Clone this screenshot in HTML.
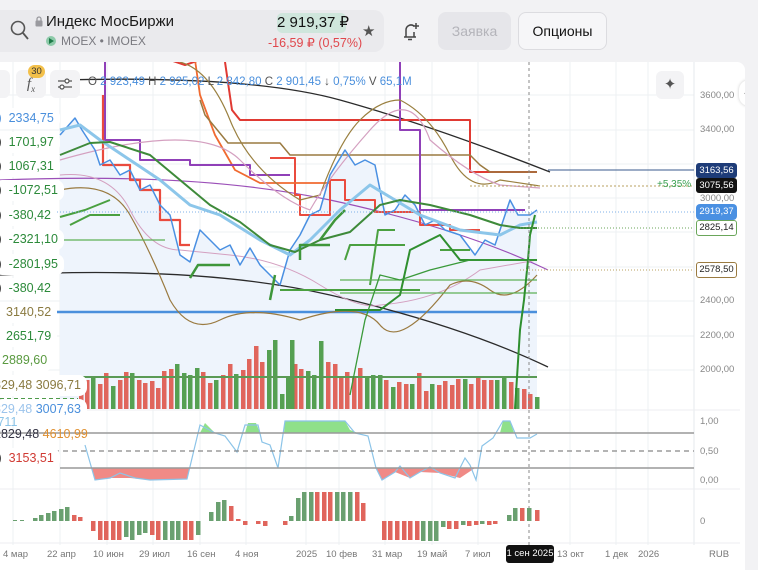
<!DOCTYPE html>
<html><head><meta charset="utf-8"><style>
*{margin:0;padding:0;box-sizing:border-box}
body{width:758px;height:570px;overflow:hidden;background:#f2f2f4;font-family:"Liberation Sans","DejaVu Sans",sans-serif;position:relative}
.card{position:absolute;left:0;top:10px;width:384px;height:42px;background:#eaeaed;border-radius:0 10px 10px 0}
.abs{position:absolute;white-space:nowrap}
.chart{position:absolute;left:0;top:62px;width:745px;height:508px;background:#fff;border-radius:0 8px 0 0;overflow:hidden}
.lbl{position:absolute;left:-6px;height:21px;background:#fff;border-radius:8px;font-size:12.5px;line-height:21px;padding:0 6px 0 0;white-space:nowrap;color:#333}
</style></head><body>
<div class="card"></div>
<svg class="abs" style="left:10px;top:20px" width="20" height="22" viewBox="0 0 20 22"><circle cx="8" cy="8" r="6.5" fill="none" stroke="#555" stroke-width="1.6"/><path d="M13 13l5 6" stroke="#555" stroke-width="1.8"/></svg>
<svg class="abs" style="left:35px;top:16px" width="8" height="11" viewBox="0 0 8 11"><rect x="0.5" y="4.5" width="7" height="6" rx="1" fill="#9a9a9f"/><path d="M2 5V3a2 2 0 0 1 4 0v2" fill="none" stroke="#9a9a9f" stroke-width="1.3"/></svg>
<div class="abs" style="left:46px;top:13px;font-size:15px;color:#1a1a1a">Индекс МосБиржи</div>
<div class="abs" style="left:46px;top:36px;width:10px;height:10px;border-radius:5px;background:#8dcaa9"></div>
<div class="abs" style="left:49px;top:38px;width:0;height:0;border-left:5px solid #1d7a48;border-top:3px solid transparent;border-bottom:3px solid transparent"></div>
<div class="abs" style="left:61px;top:34px;font-size:12px;color:#7a7a80">MOEX • IMOEX</div>
<div class="abs" style="left:277px;top:13px;width:69px;height:20px;background:#cfe6dc;border-radius:5px;font-size:15px;line-height:20px;text-align:center;color:#111">2 919,37 ₽</div>
<div class="abs" style="left:268px;top:35px;font-size:12.5px;color:#e0474c">-16,59 ₽ (0,57%)</div>
<div class="abs" style="left:362px;top:22px;font-size:15px;color:#555">★</div>
<svg class="abs" style="left:400px;top:20px" width="22" height="22" viewBox="0 0 22 22"><path d="M4 17h12M6 17V10a5 5 0 0 1 8-4M14 17v-5M8 19.5h4" fill="none" stroke="#444" stroke-width="1.5"/><path d="M16 3v6M13 6h6" stroke="#444" stroke-width="1.5"/></svg>
<div class="abs" style="left:438px;top:12px;width:73px;height:38px;background:#e6e6ea;border-radius:8px;font-size:14px;line-height:38px;text-align:center;color:#b4b4ba">Заявка</div>
<div class="abs" style="left:518px;top:12px;width:89px;height:38px;background:#f6f6f8;border:1px solid #dcdce0;border-radius:8px;font-size:14px;line-height:36px;text-align:center;color:#111">Опционы</div>

<div class="chart">
<svg width="745" height="508" viewBox="0 62 745 508" style="position:absolute;left:0;top:0">
<!-- grid -->
<g stroke="#eef0f3" stroke-width="1">
<line x1="0" y1="95" x2="694" y2="95"/><line x1="0" y1="130" x2="694" y2="130"/><line x1="0" y1="164" x2="694" y2="164"/><line x1="0" y1="198" x2="694" y2="198"/><line x1="0" y1="232" x2="694" y2="232"/><line x1="0" y1="267" x2="694" y2="267"/><line x1="0" y1="301" x2="694" y2="301"/><line x1="0" y1="336" x2="694" y2="336"/><line x1="0" y1="370" x2="694" y2="370"/>
<line x1="13" y1="62" x2="13" y2="545"/><line x1="60" y1="62" x2="60" y2="545"/><line x1="107" y1="62" x2="107" y2="545"/><line x1="153" y1="62" x2="153" y2="545"/><line x1="200" y1="62" x2="200" y2="545"/><line x1="246" y1="62" x2="246" y2="545"/><line x1="306" y1="62" x2="306" y2="545"/><line x1="339" y1="62" x2="339" y2="545"/><line x1="385" y1="62" x2="385" y2="545"/><line x1="432" y1="62" x2="432" y2="545"/><line x1="478" y1="62" x2="478" y2="545"/><line x1="570" y1="62" x2="570" y2="545"/><line x1="616" y1="62" x2="616" y2="545"/><line x1="648" y1="62" x2="648" y2="545"/>
</g>
<line x1="694" y1="62" x2="694" y2="545" stroke="#e6e8ec"/>
<line x1="0" y1="410" x2="740" y2="410" stroke="#eceef1"/><line x1="0" y1="489" x2="740" y2="489" stroke="#eceef1"/><line x1="0" y1="543" x2="740" y2="543" stroke="#eceef1"/>
<!-- price fill -->
<path d="M60 135L75 118L82 130L95 150L100 165L110 160L120 175L130 170L140 190L150 185L160 205L170 215L180 255L190 262L200 230L210 240L220 250L230 245L240 265L250 248L260 265L270 275L280 285L290 250L300 235L310 215L320 210L330 175L345 150L355 165L365 160L375 165L385 215L395 210L405 195L415 205L425 225L435 220L445 230L460 235L475 255L485 240L495 245L505 215L510 200L518 215L530 215L537 210L537 409L60 409Z" fill="#eef4fc"/>
<!-- volume bars -->
<g fill="#e0655c">
<rect x="79" y="380" width="4.5" height="29"/><rect x="85" y="380" width="4.5" height="29"/><rect x="98" y="384" width="4.5" height="25"/><rect x="104" y="373" width="4.5" height="36"/><rect x="118" y="380" width="4.5" height="29"/><rect x="124" y="372" width="4.5" height="37"/><rect x="137" y="380" width="4.5" height="29"/><rect x="143" y="383" width="4.5" height="26"/><rect x="150" y="381" width="4.5" height="28"/><rect x="156" y="388" width="4.5" height="21"/><rect x="162" y="371" width="4.5" height="38"/><rect x="169" y="369" width="4.5" height="40"/><rect x="201" y="372" width="4.5" height="37"/><rect x="208" y="383" width="4.5" height="26"/><rect x="221" y="375" width="4.5" height="34"/><rect x="228" y="364" width="4.5" height="45"/><rect x="241" y="370" width="4.5" height="39"/><rect x="247" y="359" width="4.5" height="50"/><rect x="254" y="346" width="4.5" height="63"/><rect x="260" y="362" width="4.5" height="47"/><rect x="293" y="364" width="4.5" height="45"/><rect x="299" y="369" width="4.5" height="40"/><rect x="326" y="362" width="4.5" height="47"/><rect x="333" y="364" width="4.5" height="45"/><rect x="339" y="377" width="4.5" height="32"/><rect x="345" y="372" width="4.5" height="37"/><rect x="352" y="377" width="4.5" height="32"/><rect x="358" y="368" width="4.5" height="41"/><rect x="384" y="380" width="4.5" height="29"/><rect x="397" y="382" width="4.5" height="27"/><rect x="404" y="384" width="4.5" height="25"/><rect x="417" y="373" width="4.5" height="36"/><rect x="424" y="391" width="4.5" height="18"/><rect x="437" y="385" width="4.5" height="24"/><rect x="443" y="381" width="4.5" height="28"/><rect x="450" y="385" width="4.5" height="24"/><rect x="456" y="379" width="4.5" height="30"/><rect x="469" y="384" width="4.5" height="25"/><rect x="476" y="376" width="4.5" height="33"/><rect x="482" y="380" width="4.5" height="29"/><rect x="489" y="380" width="4.5" height="29"/><rect x="509" y="382" width="4.5" height="27"/><rect x="522" y="389" width="4.5" height="20"/><rect x="528" y="394" width="4.5" height="15"/>
</g>
<g fill="#55a052">
<rect x="91" y="376" width="4.5" height="33"/><rect x="111" y="386" width="4.5" height="23"/><rect x="130" y="373" width="4.5" height="36"/><rect x="175" y="364" width="4.5" height="45"/><rect x="182" y="373" width="4.5" height="36"/><rect x="188" y="375" width="4.5" height="34"/><rect x="195" y="368" width="4.5" height="41"/><rect x="214" y="380" width="4.5" height="29"/><rect x="234" y="374" width="4.5" height="35"/><rect x="267" y="350" width="4.5" height="59"/><rect x="273" y="340" width="4.5" height="69"/><rect x="280" y="394" width="4.5" height="15"/><rect x="286" y="376" width="4.5" height="33"/><rect x="290" y="340" width="4.5" height="69"/><rect x="306" y="371" width="4.5" height="38"/><rect x="312" y="375" width="4.5" height="34"/><rect x="319" y="341" width="4.5" height="68"/><rect x="365" y="377" width="4.5" height="32"/><rect x="371" y="375" width="4.5" height="34"/><rect x="378" y="375" width="4.5" height="34"/><rect x="391" y="387" width="4.5" height="22"/><rect x="410" y="384" width="4.5" height="25"/><rect x="430" y="384" width="4.5" height="25"/><rect x="463" y="379" width="4.5" height="30"/><rect x="495" y="380" width="4.5" height="29"/><rect x="502" y="376" width="4.5" height="33"/><rect x="515" y="388" width="4.5" height="21"/><rect x="535" y="397" width="4.5" height="12"/>
</g>
<line x1="78" y1="377" x2="537" y2="377" stroke="#5a9a55" stroke-width="2"/>
<line x1="0" y1="399" x2="78" y2="399" stroke="#4e9a4a" stroke-width="2" stroke-dasharray="4 3"/>
<!-- indicator lines -->
<g fill="none" stroke-linejoin="round">
<path d="M0 312H537" stroke="#4a8fdc" stroke-width="2.5"/>
<path d="M60 80Q250 75 340 100T550 172" stroke="#2b2b2b" stroke-width="1.3"/>
<path d="M0 275Q200 265 330 295T548 367" stroke="#2b2b2b" stroke-width="1.3"/>
<path d="M0 180Q200 172 330 200T548 270" stroke="#9b4fb8" stroke-width="1.2"/>
<path d="M170 60L185 65L200 60M225 62L232 110L240 120H470V172H537" stroke="#e03a33" stroke-width="2"/>
<path d="M103 95V165H130V180H140V190H160V220H180V245H190" stroke="#ea4b3e" stroke-width="2.2"/>
<path d="M270 158H295V195H300V215H330V180H345V200H375V212H420V225H450V230H480" stroke="#ea4b3e" stroke-width="2"/>
<path d="M195 60L200 95L215 135L235 170L260 183H330" stroke="#f06a30" stroke-width="1.8"/>
<path d="M200 100L205 115L228 143H280L290 155H470L480 165L490 172H537" stroke="#9a7a40" stroke-width="1.5"/>
<path d="M105 62V140H140V160H190V165H250V175H290M400 62V130H420V210H525" stroke="#9040b8" stroke-width="2"/>
<path d="M180 62Q210 70 230 120T300 200L320 195Q340 140 360 120T400 100Q430 115 450 155T500 180L540 186" stroke="#9a8040" stroke-width="1.2"/>
<path d="M60 160Q200 120 240 160T310 210Q330 175 370 130T430 140Q470 175 500 185L540 188" stroke="#d4a0c0" stroke-width="1.2"/>
<path d="M60 175Q110 170 130 210T180 250L230 255Q280 260 320 285T380 305Q440 300 480 270L537 260" stroke="#d4a0c0" stroke-width="1"/>
<path d="M60 190Q110 180 130 215T170 300Q190 335 220 320T300 320Q360 300 380 325T450 285Q470 275 490 290T537 275" stroke="#9a7a40" stroke-width="1.2"/>
<path d="M60 135L75 118L82 130L95 150L100 165L110 160L120 175L130 170L140 190L150 185L160 205L170 215L180 255L190 262L200 230L210 240L220 250L230 245L240 265L250 248L260 265L270 275L280 285L290 250L300 235L310 215L320 210L330 175L345 150L355 165L365 160L375 165L385 215L395 210L405 195L415 205L425 225L435 220L445 230L460 235L475 255L485 240L495 245L505 215L510 200L518 215L530 215L537 210" stroke="#4a90e2" stroke-width="1.5"/>
<path d="M60 130L80 125L100 140L130 160L160 180L190 205L220 215L260 240L290 255L310 240L340 210L370 185L395 200L420 215L460 230L500 235L520 225L537 222" stroke="#8cc6ea" stroke-width="3"/>
<path d="M60 155L90 143L110 142L150 155L180 180L210 205L240 222L270 245L295 252L320 240L350 232L380 205L400 200L430 205L470 215L500 225L520 228L537 228" stroke="#3e8a3a" stroke-width="2"/>
<path d="M190 278L198 265H230M270 300L275 275M300 260L300 245H330M320 240L335 220L345 210" stroke="#3e963a" stroke-width="2.5"/>
<path d="M60 217L85 210L110 200M70 225L90 215L120 215M370 285L378 230L395 230M345 260L350 245L405 245M280 290L320 290H420M440 250L470 250" stroke="#4aa040" stroke-width="2"/>
<path d="M0 240H165M0 248H60M340 280H537M340 293H537" stroke="#5fb055" stroke-width="1.3"/>
<path d="M335 310H380L400 295L410 250L420 245L440 235L460 260H537" stroke="#2f8f2f" stroke-width="2"/>
<path d="M350 395L365 320L380 275L400 280L430 270L470 260H537" stroke="#3a9a3a" stroke-width="1.3"/>
<path d="M515 409L520 330L524 300L528 260L530 235L535 215" stroke="#2f8f2f" stroke-width="2"/>
<path d="M0 312H56" stroke="#4a8fdc" stroke-width="2.5"/>
</g>
<!-- dashed guides -->
<g stroke-width="1" fill="none">
<line x1="529" y1="62" x2="529" y2="545" stroke="#888" stroke-dasharray="3 3"/>
<line x1="548" y1="170" x2="694" y2="170" stroke="#3a5a8c"/>
<line x1="470" y1="186" x2="694" y2="186" stroke="#b9a060" stroke-dasharray="2 2"/>
<line x1="0" y1="212" x2="694" y2="212" stroke="#7fb0e8" stroke-dasharray="1 2"/>
<line x1="520" y1="228" x2="694" y2="228" stroke="#6aa65a" stroke-dasharray="1 2"/>
<line x1="520" y1="270" x2="694" y2="270" stroke="#b9a060" stroke-dasharray="1 2"/>
</g>
<!-- oscillator -->
<path d="M200 433L205 423L215 433ZM245 433L248 423L256 423L260 433ZM284 433L285 421H345L350 430L358 433Z" fill="#8fe08a"/>
<path d="M500 433L503 421H510L514 433Z" fill="#8fe08a"/>
<path d="M92 468L95 480L110 478L130 478L150 480L187 479L190 468ZM376 468L382 480L395 472L410 478L420 472L440 473L460 478L475 468Z" fill="#f08a86"/>
<path d="M85 445L95 480L110 478L120 473L135 478L150 480L187 479L200 425L215 433L225 436L237 452L245 425L258 425L262 442L270 445L278 468L285 421H345L355 433L368 436L376 468L382 480L395 472L400 466L410 478L420 472L430 467L440 473L455 478L465 458L470 465L476 480L482 446L493 438L503 421H510L517 438L530 438L537 434" fill="none" stroke="#8cc4e8" stroke-width="1.2"/>
<line x1="0" y1="433" x2="694" y2="433" stroke="#999" stroke-width="1.5"/>
<line x1="0" y1="451" x2="694" y2="451" stroke="#888" stroke-width="1.2" stroke-dasharray="5 4"/>
<line x1="60" y1="468" x2="694" y2="468" stroke="#999" stroke-width="1.5"/>
<!-- macd -->
<g fill="#6aa070">
<rect x="13" y="520" width="4" height="1"/><rect x="20" y="520" width="4" height="1"/><rect x="33" y="518" width="4.5" height="3"/><rect x="39" y="515" width="4.5" height="6"/><rect x="46" y="513" width="4.5" height="8"/><rect x="52" y="511" width="4.5" height="10"/><rect x="59" y="509" width="4.5" height="12"/><rect x="65" y="507" width="4.5" height="14"/><rect x="124" y="521" width="4.5" height="16"/><rect x="130" y="521" width="4.5" height="19"/><rect x="137" y="521" width="4.5" height="14"/><rect x="143" y="521" width="4.5" height="12"/><rect x="163" y="521" width="4.5" height="19"/><rect x="170" y="521" width="4.5" height="19"/><rect x="176" y="521" width="4.5" height="19"/><rect x="196" y="521" width="4.5" height="14"/><rect x="209" y="512" width="4.5" height="9"/><rect x="216" y="502" width="4.5" height="19"/><rect x="222" y="500" width="4.5" height="21"/><rect x="289" y="516" width="4.5" height="5"/><rect x="296" y="498" width="4.5" height="23"/><rect x="302" y="492" width="4.5" height="29"/><rect x="309" y="492" width="4.5" height="29"/><rect x="335" y="492" width="4.5" height="29"/><rect x="341" y="492" width="4.5" height="29"/><rect x="348" y="492" width="4.5" height="29"/><rect x="421" y="521" width="4.5" height="20"/><rect x="428" y="521" width="4.5" height="20"/><rect x="434" y="521" width="4.5" height="20"/><rect x="441" y="521" width="4.5" height="6"/><rect x="461" y="521" width="4.5" height="4"/><rect x="480" y="521" width="4.5" height="3"/><rect x="507" y="515" width="4.5" height="6"/><rect x="513" y="508" width="4.5" height="13"/><rect x="527" y="508" width="4.5" height="13"/>
</g>
<g fill="#e0655c">
<rect x="72" y="515" width="4.5" height="6"/><rect x="78" y="517" width="4.5" height="4"/><rect x="91" y="521" width="4.5" height="10"/><rect x="98" y="521" width="4.5" height="19"/><rect x="104" y="521" width="4.5" height="19"/><rect x="111" y="521" width="4.5" height="19"/><rect x="117" y="521" width="4.5" height="19"/><rect x="150" y="521" width="4.5" height="14"/><rect x="156" y="521" width="4.5" height="19"/><rect x="183" y="521" width="4.5" height="19"/><rect x="189" y="521" width="4.5" height="19"/><rect x="229" y="506" width="4.5" height="15"/><rect x="236" y="519" width="4.5" height="2"/><rect x="243" y="521" width="4.5" height="4"/><rect x="256" y="521" width="4.5" height="3"/><rect x="263" y="521" width="4.5" height="5"/><rect x="283" y="521" width="4.5" height="4"/><rect x="315" y="492" width="4.5" height="29"/><rect x="322" y="492" width="4.5" height="29"/><rect x="328" y="492" width="4.5" height="29"/><rect x="355" y="492" width="4.5" height="29"/><rect x="361" y="503" width="4.5" height="18"/><rect x="382" y="521" width="4.5" height="19"/><rect x="388" y="521" width="4.5" height="19"/><rect x="395" y="521" width="4.5" height="19"/><rect x="402" y="521" width="4.5" height="19"/><rect x="408" y="521" width="4.5" height="19"/><rect x="415" y="521" width="4.5" height="19"/><rect x="447" y="521" width="4.5" height="8"/><rect x="454" y="521" width="4.5" height="8"/><rect x="467" y="521" width="4.5" height="5"/><rect x="474" y="521" width="4.5" height="4"/><rect x="487" y="521" width="4.5" height="4"/><rect x="493" y="521" width="4.5" height="3"/><rect x="520" y="508" width="4.5" height="13"/><rect x="535" y="510" width="4.5" height="11"/>
</g>
</svg>

<!-- legend -->
<div class="abs" style="left:-10px;top:8px;width:20px;height:28px;background:#f3f3f5;border-radius:6px"></div>
<div class="abs" style="left:16px;top:8px;width:30px;height:28px;background:#f3f3f5;border-radius:6px;font:italic 15px 'Liberation Serif',serif;color:#555;text-align:center;line-height:28px">f<sub style="font-size:9px">x</sub></div>
<div class="abs" style="left:28px;top:3px;width:17px;height:13px;background:#f3c04a;border-radius:7px;font-size:9.5px;line-height:13px;text-align:center;color:#333">30</div>
<div class="abs" style="left:50px;top:8px;width:30px;height:28px;background:#f3f3f5;border-radius:6px"></div>
<svg class="abs" style="left:56px;top:15px" width="18" height="14" viewBox="0 0 18 14"><path d="M2 4h14M2 10h14" stroke="#555" stroke-width="1.3"/><circle cx="11" cy="4" r="2" fill="#fff" stroke="#555" stroke-width="1.2"/><circle cx="6" cy="10" r="2" fill="#fff" stroke="#555" stroke-width="1.2"/></svg>
<div class="abs" style="left:88px;top:14px;font-size:11.5px;color:#555">O <span style="color:#4a8fdc">2 923,49</span> H <span style="color:#4a8fdc">2 925,02</span> L <span style="color:#4a8fdc">2 842,80</span> C <span style="color:#4a8fdc">2 901,45</span> ↓ <span style="color:#4a8fdc">0,75%</span> V <span style="color:#4a8fdc">65,1M</span></div>
<div class="abs" style="left:656px;top:9px;width:28px;height:28px;background:#f3f3f5;border-radius:6px;text-align:center;line-height:28px;font-size:15px;color:#555">✦</div>
<div class="abs" style="left:739px;top:18px;width:20px;height:26px;background:#fff;border-radius:13px;box-shadow:0 0 3px #ccc;font-size:13px;color:#444;line-height:26px;padding-left:5px">‹</div>

<div class="lbl" style="top:46px;color:#4a8fdc">&nbsp;)&nbsp; <span style="color:#4a8fdc">2334,75</span></div>
<div class="lbl" style="top:70px">&nbsp;)&nbsp; <span style="color:#2c8a3a">1701,97</span></div>
<div class="lbl" style="top:94px">&nbsp;)&nbsp; <span style="color:#2c8a3a">1067,31</span></div>
<div class="lbl" style="top:118px">&nbsp;)&nbsp; <span style="color:#2c8a3a">-1072,51</span></div>
<div class="lbl" style="top:143px">&nbsp;)&nbsp; <span style="color:#2c8a3a">-380,42</span></div>
<div class="lbl" style="top:167px">&nbsp;)&nbsp; <span style="color:#2c8a3a">-2321,10</span></div>
<div class="lbl" style="top:192px">&nbsp;)&nbsp; <span style="color:#2c8a3a">-2801,95</span></div>
<div class="lbl" style="top:216px">&nbsp;)&nbsp; <span style="color:#2c8a3a">-380,42</span></div>
<div class="lbl" style="top:240px;padding-left:12px;color:#8a7a40">3140,52</div>
<div class="lbl" style="top:264px;padding-left:12px;color:#2c8a3a">2651,79</div>
<div class="lbl" style="top:288px;padding-left:8px;color:#5a9a40">2889,60</div>
<div class="lbl" style="top:313px;color:#8a7a40">829,48 3096,71</div>
<div class="lbl" style="top:337px;color:#4a8fdc"><span style="color:#9cc4ec">829,48</span> 3007,63</div>
<div class="lbl" style="top:350px;background:transparent;color:#8cc4e8">,711</div>
<div class="lbl" style="top:362px;background:transparent"><span style="color:#334">2829,48</span> <span style="color:#e09030">4610,99</span></div>
<div class="lbl" style="top:386px">&nbsp;)&nbsp; <span style="color:#d03a33">3153,51</span></div>

<!-- right axis -->
<div class="abs" style="left:700px;top:28px;font-size:9.5px;color:#888">3600,00</div>
<div class="abs" style="left:700px;top:62px;font-size:9.5px;color:#888">3400,00</div>
<div class="abs" style="left:700px;top:131px;font-size:9.5px;color:#888">3000,00</div>
<div class="abs" style="left:700px;top:233px;font-size:9.5px;color:#888">2400,00</div>
<div class="abs" style="left:700px;top:268px;font-size:9.5px;color:#888">2200,00</div>
<div class="abs" style="left:700px;top:302px;font-size:9.5px;color:#888">2000,00</div>
<div class="abs" style="left:696px;top:101px;width:41px;height:15px;background:#1e3c78;border-radius:3px;font-size:9.5px;line-height:15px;text-align:center;color:#fff">3163,56</div>
<div class="abs" style="left:696px;top:116px;width:41px;height:15px;background:#111;border-radius:3px;font-size:9.5px;line-height:15px;text-align:center;color:#fff">3075,56</div>
<div class="abs" style="left:657px;top:117px;font-size:10px;color:#3aa050">+5,35%</div>
<div class="abs" style="left:696px;top:142px;width:41px;height:16px;background:#4a90e2;border-radius:4px;font-size:9.5px;line-height:16px;text-align:center;color:#fff">2919,37</div>
<div class="abs" style="left:696px;top:158px;width:41px;height:16px;background:#fff;border:1px solid #6aa65a;border-radius:3px;font-size:9.5px;line-height:14px;text-align:center;color:#222">2825,14</div>
<div class="abs" style="left:696px;top:200px;width:41px;height:16px;background:#fff;border:1px solid #9a7a40;border-radius:3px;font-size:9.5px;line-height:14px;text-align:center;color:#222">2578,50</div>
<div class="abs" style="left:700px;top:354px;font-size:9.5px;color:#888">1,00</div>
<div class="abs" style="left:700px;top:384px;font-size:9.5px;color:#888">0,50</div>
<div class="abs" style="left:700px;top:413px;font-size:9.5px;color:#888">0,00</div>
<div class="abs" style="left:700px;top:454px;font-size:9.5px;color:#888">0</div>

<!-- date axis -->
<div class="abs" style="top:487px;left:3px;font-size:9.5px;color:#777">4 мар</div>
<div class="abs" style="top:487px;left:47px;font-size:9.5px;color:#777">22 апр</div>
<div class="abs" style="top:487px;left:93px;font-size:9.5px;color:#777">10 июн</div>
<div class="abs" style="top:487px;left:139px;font-size:9.5px;color:#777">29 июл</div>
<div class="abs" style="top:487px;left:187px;font-size:9.5px;color:#777">16 сен</div>
<div class="abs" style="top:487px;left:235px;font-size:9.5px;color:#777">4 ноя</div>
<div class="abs" style="top:487px;left:296px;font-size:9.5px;color:#777">2025</div>
<div class="abs" style="top:487px;left:326px;font-size:9.5px;color:#777">10 фев</div>
<div class="abs" style="top:487px;left:372px;font-size:9.5px;color:#777">31 мар</div>
<div class="abs" style="top:487px;left:417px;font-size:9.5px;color:#777">19 май</div>
<div class="abs" style="top:487px;left:465px;font-size:9.5px;color:#777">7 июл</div>
<div class="abs" style="top:483px;left:506px;width:48px;height:18px;background:#111;border-radius:3px;font-size:9.5px;line-height:18px;text-align:center;color:#fff">1 сен 2025</div>
<div class="abs" style="top:487px;left:557px;font-size:9.5px;color:#777">13 окт</div>
<div class="abs" style="top:487px;left:605px;font-size:9.5px;color:#777">1 дек</div>
<div class="abs" style="top:487px;left:638px;font-size:9.5px;color:#777">2026</div>
<div class="abs" style="top:487px;left:709px;font-size:9.5px;color:#777">RUB</div>
</div>
</body></html>
